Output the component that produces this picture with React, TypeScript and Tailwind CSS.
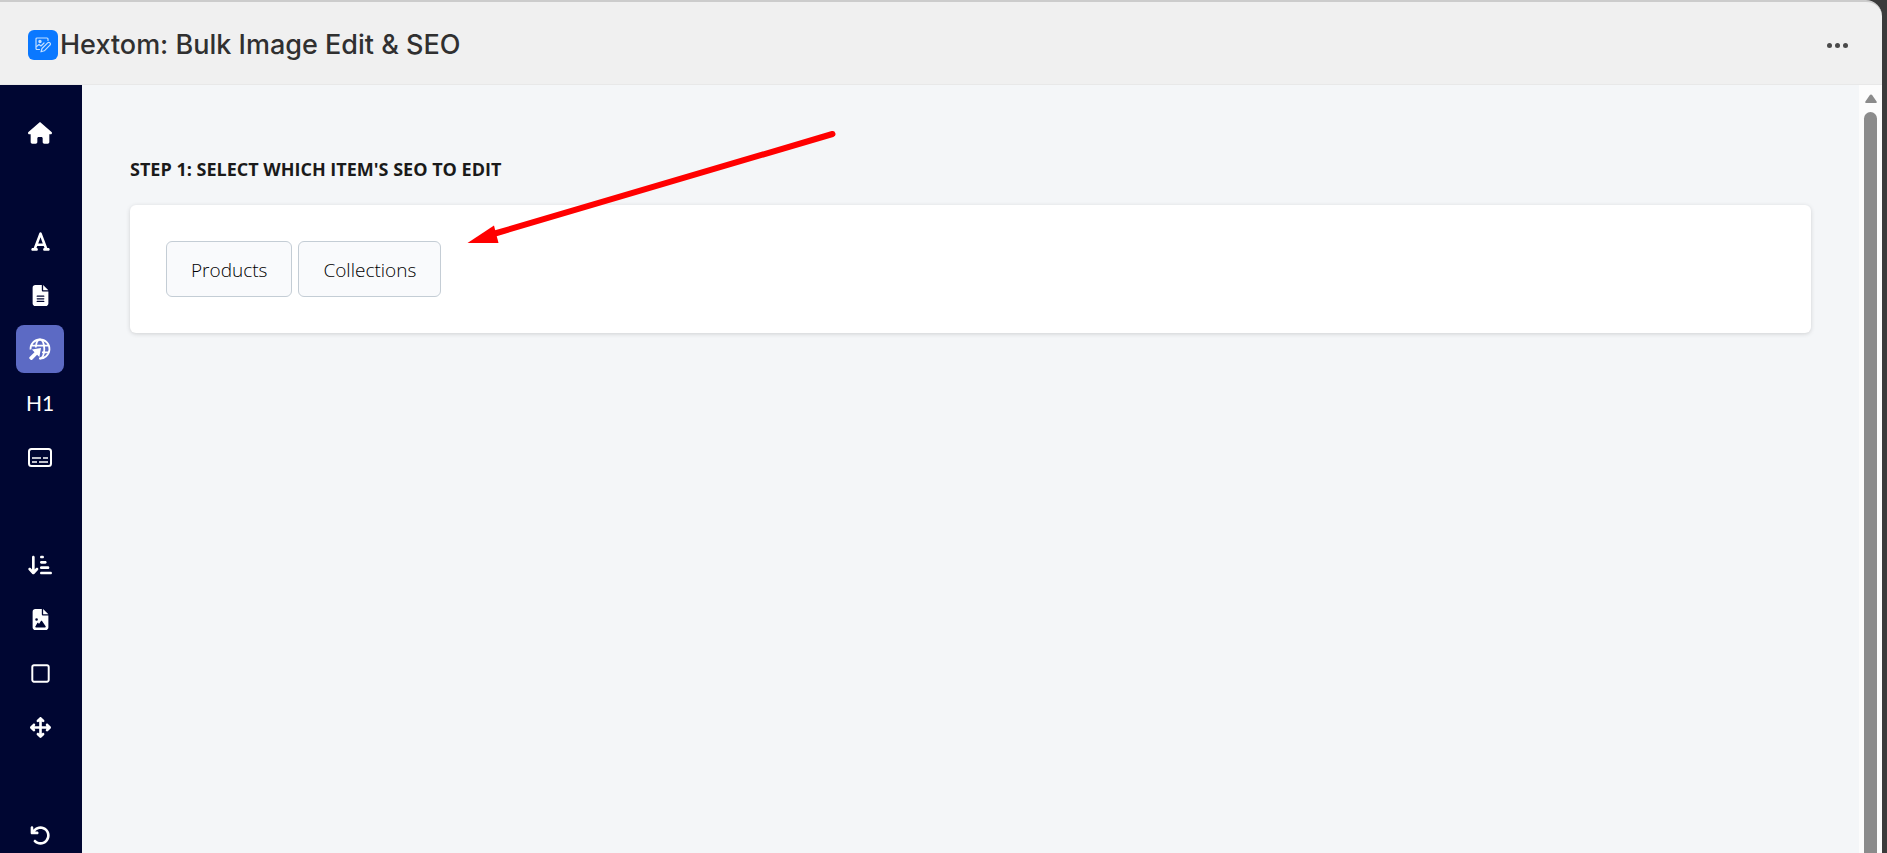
import type { ReactNode } from "react";
import {
  FaArrowDownShortWide,
  FaArrowRotateLeft,
  FaArrowsUpDownLeftRight,
  FaFileImage,
  FaFileLines,
  FaFont,
  FaHouse,
  FaRegSquare,
} from "react-icons/fa6";

type NavItem = {
  label: string;
  icon: ReactNode;
  active?: boolean;
};

function LogoIcon() {
  return (
    <svg width="16" height="16" viewBox="0 0 16 16" fill="none" stroke="#c4dfff" strokeWidth="1.2" strokeLinecap="round" strokeLinejoin="round" aria-hidden="true">
      <path d="M4.500 12.500H2a1 1 0 0 1-1-1V2a1 1 0 0 1 1-1h10a1 1 0 0 1 1 1v1.500" />
      <circle cx="5" cy="4.500" r="1.100" fill="#c4dfff" />
      <path d="M1.500 9.500 4 7.500l2 1.500 3-3" />
      <path d="m6 14.800 1-3.300 5.600-5.600a1.600 1.600 0 0 1 2.300 2.300l-5.600 5.600z" />
    </svg>
  );
}

function GlobePointerIcon() {
  return (
    <svg width="22" height="22" viewBox="0 0 22 22" fill="none" stroke="white" strokeWidth="1.8" aria-hidden="true">
      <path d="M1.500 11.500a9.500 9.500 0 1 1 8.500 8.950" />
      <path d="M6.800 9.500C7.100 4.800 8.900 1.500 11 1.500c2.400 0 4.300 4 4.300 9.500s-1.900 9.500-4.300 9.500" />
      <path d="M2.200 7.600h17.600M13 14.400h7" />
      <path d="M2.900 11.600 12 10 10.400 19.100 8.100 16.800 3.200 21.700a1.100 1.100 0 0 1-1.600 0l-1-1a1.100 1.100 0 0 1 0-1.600l4.900-4.900z" fill="white" stroke="none" />
    </svg>
  );
}

function CaptionsIcon() {
  return (
    <svg width="24" height="19" viewBox="0 0 24 19" fill="none" stroke="white" strokeWidth="2" aria-hidden="true">
      <rect x="1" y="1" width="22" height="17" rx="2.500" />
      <path d="M4 10h9M15 10h5M4 14h5M11 14h9" strokeWidth="1.700" />
    </svg>
  );
}

const navGroups: NavItem[][] = [
  [{ label: "Home", icon: <FaHouse size={24} /> }],
  [
    { label: "Alt text", icon: <FaFont size={21} /> },
    { label: "File name", icon: <FaFileLines size={21} /> },
    { label: "Meta tags", icon: <GlobePointerIcon />, active: true },
    { label: "Heading", icon: <span className="font-['Lato',sans-serif] text-[21px] leading-6">H1</span> },
    { label: "Captions", icon: <CaptionsIcon /> },
  ],
  [
    { label: "Sort images", icon: <FaArrowDownShortWide size={24} /> },
    { label: "Image format", icon: <FaFileImage size={21} /> },
    { label: "Square images", icon: <FaRegSquare size={21} /> },
    { label: "Resize images", icon: <FaArrowsUpDownLeftRight size={21} /> },
  ],
  [{ label: "Undo", icon: <FaArrowRotateLeft size={21} /> }],
];

function Header() {
  return (
    <header className="flex h-[85px] shrink-0 items-center justify-between rounded-tr-2xl border-t-2 border-b border-t-[#cccccc] border-b-[#e8e8e8] bg-[#f0f0f0] pt-1 pr-8 pl-7">
      <div className="flex items-center gap-0.5">
        <div className="flex size-[30px] items-center justify-center rounded-md bg-[#0a78ff]">
          <LogoIcon />
        </div>
        <h1 className="text-[27px] leading-8 font-medium text-[#303030]">Hextom: Bulk Image Edit &amp; SEO</h1>
      </div>
      <button type="button" aria-label="More actions" className="flex h-8 items-center gap-[3px] px-0.5">
        <span className="size-[5px] rounded-full bg-[#4a4a4a]" />
        <span className="size-[5px] rounded-full bg-[#4a4a4a]" />
        <span className="size-[5px] rounded-full bg-[#4a4a4a]" />
      </button>
    </header>
  );
}

function Sidebar() {
  return (
    <nav aria-label="Main" className="flex w-[82px] shrink-0 flex-col gap-[60px] overflow-hidden bg-[#000632] pt-6 pl-4">
      {navGroups.map((group, index) => (
        <div key={index} className="flex flex-col gap-1.5">
          {group.map((item) => (
            <button
              key={item.label}
              type="button"
              aria-label={item.label}
              className={`flex size-12 items-center justify-center rounded-lg text-white ${item.active ? "bg-[#5c6ac4]" : ""}`}
            >
              {item.icon}
            </button>
          ))}
        </div>
      ))}
    </nav>
  );
}

function Scrollbar() {
  return (
    <div className="flex w-[23px] shrink-0 flex-col items-center bg-[#fcfcfc] pt-2" aria-hidden="true">
      <svg width="12" height="11" viewBox="0 0 12 11" className="shrink-0" fill="#8b8b8b">
        <path d="M4.700 2.200a1.500 1.500 0 0 1 2.600 0l4.300 6.300a1 1 0 0 1-.8 1.500H1.200a1 1 0 0 1-.8-1.500z" />
      </svg>
      <div className="mt-2 w-[13px] flex-1 rounded-t-full bg-[#8b8b8b]" />
    </div>
  );
}

// Points from the heading down to the item buttons
function PointerArrow() {
  return (
    <svg className="pointer-events-none absolute top-[43px] left-[385px]" width="372" height="120" viewBox="0 0 372 120" aria-hidden="true">
      <path d="M365.500 6 28 105.500" stroke="#ff0000" strokeWidth="6" strokeLinecap="round" />
      <path d="M0.500 115 27 97.500 31.500 115z" fill="#ff0000" />
    </svg>
  );
}

function ItemButton({ children }: { children: ReactNode }) {
  return (
    <button
      type="button"
      className="h-14 rounded-md border border-[#c4cdd5] bg-[#f9fafc] px-6 pt-0.5 font-['Open_Sans',sans-serif] text-[19px] font-light text-black"
    >
      {children}
    </button>
  );
}

export default function App() {
  return (
    <div className="h-screen overflow-hidden bg-[#3b3b3b] pr-[5px] font-['Inter',sans-serif]">
      <div className="flex h-full flex-col">
        <Header />
        <div className="flex min-h-0 flex-1">
          <Sidebar />
          <main className="relative min-w-0 flex-1 bg-[#f4f6f8] px-12 pt-[72px]">
            <h2 className="font-['Open_Sans',sans-serif] text-lg leading-6 font-bold text-[#1a1a1a]">
              STEP 1: SELECT WHICH ITEM'S SEO TO EDIT
            </h2>
            <section className="mt-6 flex gap-1.5 rounded-md bg-white p-9 shadow-[0_1px_4px_rgba(63,63,68,0.2)]">
              <ItemButton>Products</ItemButton>
              <ItemButton>Collections</ItemButton>
            </section>
            <PointerArrow />
          </main>
          <Scrollbar />
        </div>
      </div>
    </div>
  );
}
